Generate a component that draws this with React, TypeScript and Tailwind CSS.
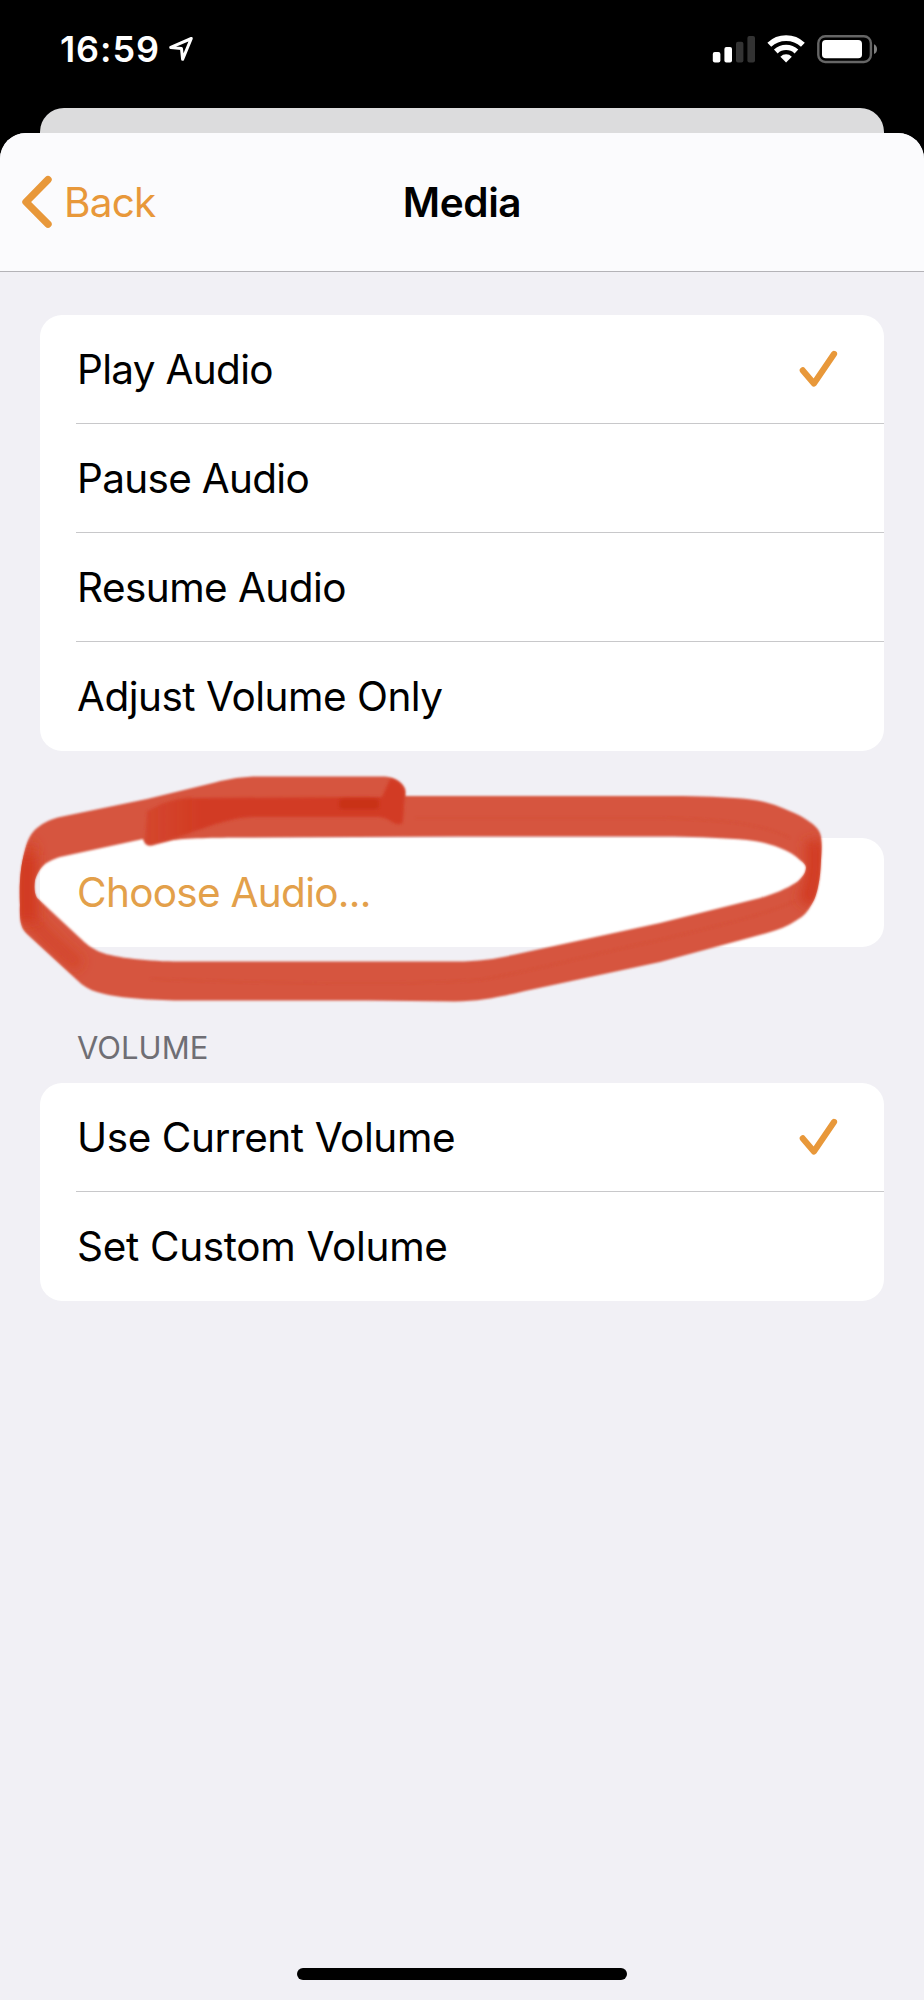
import React from "react";

type Row = { label: string; tracking: string; checked?: boolean; accent?: boolean };

const MEDIA_ROWS: Row[] = [
  { label: "Play Audio", tracking: "tracking-[-0.68px]", checked: true },
  { label: "Pause Audio", tracking: "tracking-[-0.7px]" },
  { label: "Resume Audio", tracking: "tracking-[-0.56px]" },
  { label: "Adjust Volume Only", tracking: "tracking-[-0.5px]" },
];

const AUDIO_ROWS: Row[] = [
  { label: "Choose Audio...", tracking: "tracking-[-0.7px]", accent: true },
];

const VOLUME_ROWS: Row[] = [
  { label: "Use Current Volume", tracking: "tracking-[-0.42px]", checked: true },
  { label: "Set Custom Volume", tracking: "tracking-[-0.33px]" },
];

function CheckIcon() {
  return (
    <svg width="40" height="40" viewBox="0 0 40 40" fill="none" className="shrink-0">
      <path
        d="M3.8 21.4 14.9 34.4 35 4.9"
        stroke="#E8983A"
        strokeWidth="6.2"
        strokeLinecap="round"
        strokeLinejoin="round"
      />
    </svg>
  );
}

function ListGroup({ rows }: { rows: Row[] }) {
  return (
    <ul className="overflow-hidden rounded-[22px] bg-white pl-9">
      {rows.map((row, i) => (
        <li
          key={row.label}
          className={`flex h-[109px] items-center justify-between pr-[45px] ${
            i < rows.length - 1 ? "border-b border-[#c8c8ca]" : ""
          } ${row.accent ? "text-[#E3A04A]" : "text-black"}`}
        >
          <span className={`pt-0.5 pl-px text-[40.5px] leading-none whitespace-nowrap ${row.tracking}`}>
            {row.label}
          </span>
          {row.checked && <CheckIcon />}
        </li>
      ))}
    </ul>
  );
}

function StatusBar() {
  return (
    <div className="flex h-[108px] items-start justify-between pr-[46px] pl-[60px] text-white">
      <div className="flex items-start pt-[31px]">
        <span className="text-[36px] leading-[36px] font-semibold tracking-[0.9px]">16:59</span>
        <svg width="28" height="28" viewBox="0 0 28 28" fill="none" className="mt-[4px] ml-[8px]">
          <path
            d="M23.3 3.5 2.7 12.4 13.5 13.6 14.6 24.3Z"
            stroke="white"
            strokeWidth="3"
            strokeLinejoin="round"
          />
        </svg>
      </div>
      <svg width="166" height="30" viewBox="0 0 166 30" className="mt-[34px]">
        <rect x="0.8" y="18" width="7.6" height="10.6" rx="2" fill="white" />
        <rect x="12.4" y="13" width="7.6" height="15.6" rx="2" fill="white" />
        <rect x="24" y="7.8" width="7.4" height="20.8" rx="2" fill="#333333" />
        <rect x="35.4" y="2" width="7.6" height="26.6" rx="2" fill="#333333" />
        <g fill="none" stroke="white">
          <path d="M57.3 10.8A24.5 24.5 0 0 1 90.9 10.8" strokeWidth="5.6" />
          <path d="M63.8 17.4A15.2 15.2 0 0 1 84.4 17.4" strokeWidth="5.4" />
        </g>
        <path d="M68.4 22.7A8 8 0 0 1 79.8 22.7L74.1 28.4Z" fill="white" />
        <rect x="106.3" y="2.2" width="52.6" height="25.8" rx="7" fill="none" stroke="#666666" strokeWidth="2.4" />
        <rect x="110" y="6" width="40" height="18.2" rx="3.8" fill="white" />
        <path d="M162 10.3C166 11.6 166 18.8 162 20.1Z" fill="#808080" />
      </svg>
    </div>
  );
}

function MarkerCircle() {
  return (
    <svg
      width="924"
      height="270"
      viewBox="0 760 924 270"
      className="pointer-events-none absolute top-[627px] left-0"
    >
      <defs>
        <filter id="soft" x="-5%" y="-5%" width="110%" height="110%">
          <feGaussianBlur stdDeviation="0.8" />
        </filter>
        <filter id="softer" x="-50%" y="-50%" width="200%" height="200%">
          <feGaussianBlur stdDeviation="1.6" />
        </filter>
        <filter id="shade" filterUnits="userSpaceOnUse" x="0" y="760" width="924" height="270">
          <feGaussianBlur stdDeviation="6" />
        </filter>
        <linearGradient id="fadeIn" gradientUnits="userSpaceOnUse" x1="145" y1="0" x2="200" y2="0">
          <stop offset="0" stopColor="#D23A21" stopOpacity="0.55" />
          <stop offset="1" stopColor="#D23A21" stopOpacity="0.95" />
        </linearGradient>
        <clipPath id="ring">
          <path clipRule="evenodd" d={RING} />
        </clipPath>
      </defs>
      <path d={RING} fillRule="evenodd" fill="#D5523C" fillOpacity="0.98" filter="url(#soft)" />
      <g clipPath="url(#ring)">
        <path d="M30 842C24 865 24 900 30 918C45 936 60 950 80 966" fill="none" stroke="#D23A20" strokeWidth="15" strokeOpacity="0.6" filter="url(#shade)" />
        <path d="M27 855V922" fill="none" stroke="#D23A20" strokeWidth="20" filter="url(#shade)" />
        <path d="M814 840C817 865 815 885 806 904" fill="none" stroke="#D23A20" strokeWidth="18" filter="url(#shade)" />
      </g>
      <path
        d="M147 811C160 804 172 799 187 798L382 797L390 779C398 779 404 786 405 792L403 821C402 826 396 825 392 822C386 818 383 817 375 817H256C235 817 225 822 213 825C190 833 170 840 156 844C147 847 144 844 145 838Z"
        fill="url(#fadeIn)"
        filter="url(#softer)"
      />
      <rect x="339" y="798.5" width="40" height="11" rx="4" fill="#C93119" filter="url(#softer)" />
      <g fill="none" stroke="#D0442C" strokeOpacity="0.3" strokeWidth="2" filter="url(#soft)">
        <path d="M415 818H660C710 819 760 822 790 838" />
        <path d="M795 901C760 917 700 930 660 940C600 952 530 972 480 980C400 986 220 982 150 979" />
      </g>
    </svg>
  );
}

const RING =
  "M20 905C19 880 21 865 25 850C28 838 32 832 37 828C44 822 52 819 60 817L147 799L215 782.5C230 778.5 243 776.5 260 776.5H385C395 777 404 784 405 790V796H673C700 796 725 797 747 799C760 800.5 770 803 780 807C792 812 800 815 807 820C815 825 820 830 821 837C822 845 821.5 852 821 860C820.5 870 820 878 818 887C816 896 814 901 810 907C806 914 802 917 797 920C788 926 778 930 767 933L660 962L525 991C500 997 480 1001.5 455 1001.500L367 1000.500H180C150 1000 115 998 97 992C90 990 83 986 77 980L27 934C21 928 19.5 922 20 905Z" +
  "M35 880C36 876 39 870 42 867C46 862 54 859 60 857L143 839C146 847 150 846 156 844L173 840C190 838 220 837.5 250 837.5L460 836.5H673C700 837 725 838 747 840C760 841.5 770 844 780 848C788 851 795 855 800 860C804 863 806 865 806 867.5C806 873 802 878 797 882C786 889 774 894 760 898L660 923L515 954.500C495 959 480 961.5 455 961.5H180C150 961.5 115 958 100 952C91 948 85 943 80 938L37 898C34 893 34 886 35 880Z";

export default function App() {
  return (
    <div className="flex h-[2000px] w-[924px] flex-col overflow-hidden bg-black font-['Inter',sans-serif]">
      <StatusBar />
      <div className="mx-10 h-[25px] rounded-t-[24px] bg-[#DCDCDD]" />
      <main className="relative flex flex-1 flex-col bg-[linear-gradient(#DCDCDD,#DCDCDD)] bg-[length:844px_40px] bg-[position:40px_0] bg-no-repeat">
        <div className="flex flex-1 flex-col overflow-hidden rounded-t-[26px] bg-[#F1F0F5]">
          <header className="mb-[43px] grid h-[139px] grid-cols-3 items-center border-b border-[#B4B3B7] bg-[#FBFBFD]">
            <div className="flex items-center pl-[21px] text-[#E8983A]">
              <svg width="34" height="56" viewBox="0 0 34 56" fill="none">
                <path
                  d="M27 5.6 5 28 27 50.2"
                  stroke="#E8983A"
                  strokeWidth="7.4"
                  strokeLinecap="round"
                  strokeLinejoin="round"
                />
              </svg>
              <span className="ml-[9px] pt-0.5 text-[40.5px] leading-none tracking-[-0.8px]">Back</span>
            </div>
            <h1 className="pt-[2px] text-center text-[40.5px] leading-none font-semibold tracking-[-0.4px] text-black">
              Media
            </h1>
          </header>
          <div className="flex flex-1 flex-col px-10">
            <ListGroup rows={MEDIA_ROWS} />
            <div className="h-[87px]" />
            <ListGroup rows={AUDIO_ROWS} />
            <h2 className="mt-[85px] mb-[19px] pl-[37px] text-[31px] leading-[32px] text-[#6F6E74]">
              VOLUME
            </h2>
            <ListGroup rows={VOLUME_ROWS} />
          </div>
          <div className="mb-5 h-3 w-[330px] self-center rounded-full bg-black" />
        </div>
        <MarkerCircle />
      </main>
    </div>
  );
}
